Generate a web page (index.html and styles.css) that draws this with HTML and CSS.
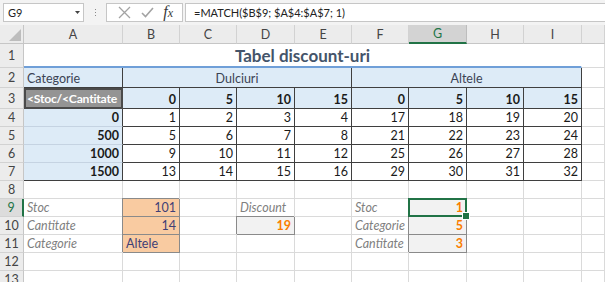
FILE: index.html
```html
<!DOCTYPE html>
<html>
<head>
<meta charset="utf-8">
<link rel="stylesheet" href="styles.css">
</head>
<body>
<div class="app">
  <div class="fbar">
    <div class="namebox"><span>G9</span><svg class="dd" width="5" height="3" viewBox="0 0 5 3"><path d="M0 0H5L2.5 3Z" fill="#444"/></svg></div>
    <div class="grip"><i></i><i></i><i></i></div>
    <div class="btns">
      <svg width="13" height="13" viewBox="0 0 13 13"><path d="M1 1L12 12M12 1L1 12" stroke="#a3a3a3" stroke-width="1.3"/></svg>
      <svg width="13" height="11" viewBox="0 0 13 11"><path d="M1 6L4.5 9.5L12 1" stroke="#a3a3a3" stroke-width="1.6" fill="none"/></svg>
      <span class="fx"><i>f</i><i class="x">x</i></span>
    </div>
    <div class="formula">=MATCH($B$9; $A$4:$A$7; 1)</div>
  </div>
  <div class="sheet">
    <div class="corner"><svg width="12" height="12" viewBox="0 0 12 12"><path d="M12 0V12H0Z" fill="#bdbdbd"/></svg></div>
    <div class="ch">A</div><div class="ch">B</div><div class="ch">C</div><div class="ch">D</div><div class="ch">E</div><div class="ch">F</div><div class="ch sel">G</div><div class="ch">H</div><div class="ch">I</div><div class="ch"></div>

    <div class="rh">1</div>
    <div class="c title">Tabel discount-uri</div>
    <div class="c"></div>

    <div class="rh">2</div>
    <div class="c hdr dr db txt2">Categorie</div>
    <div class="c hdr dr db ctr txt2 span4">Dulciuri</div>
    <div class="c hdr dr db ctr txt2 span4">Altele</div>
    <div class="c"></div>

    <div class="rh">3</div>
    <div class="c check">&lt;Stoc/&lt;Cantitate</div>
    <div class="c hdr dr db r b">0</div><div class="c hdr dr db r b">5</div><div class="c hdr dr db r b">10</div><div class="c hdr dr db r b">15</div>
    <div class="c hdr dr db r b">0</div><div class="c hdr dr db r b">5</div><div class="c hdr dr db r b">10</div><div class="c hdr dr db r b">15</div>
    <div class="c"></div>

    <div class="rh">4</div>
    <div class="c hdr dr lb r b">0</div>
    <div class="c dr db r">1</div><div class="c dr db r">2</div><div class="c dr db r">3</div><div class="c dr db r">4</div><div class="c dr db r">17</div><div class="c dr db r">18</div><div class="c dr db r">19</div><div class="c dr db r">20</div>
    <div class="c"></div>

    <div class="rh">5</div>
    <div class="c hdr dr lb r b">500</div>
    <div class="c dr db r">5</div><div class="c dr db r">6</div><div class="c dr db r">7</div><div class="c dr db r">8</div><div class="c dr db r">21</div><div class="c dr db r">22</div><div class="c dr db r">23</div><div class="c dr db r">24</div>
    <div class="c"></div>

    <div class="rh">6</div>
    <div class="c hdr dr lb r b">1000</div>
    <div class="c dr db r">9</div><div class="c dr db r">10</div><div class="c dr db r">11</div><div class="c dr db r">12</div><div class="c dr db r">25</div><div class="c dr db r">26</div><div class="c dr db r">27</div><div class="c dr db r">28</div>
    <div class="c"></div>

    <div class="rh">7</div>
    <div class="c hdr dr db r b">1500</div>
    <div class="c dr db r">13</div><div class="c dr db r">14</div><div class="c dr db r">15</div><div class="c dr db r">16</div><div class="c dr db r">29</div><div class="c dr db r">30</div><div class="c dr db r">31</div><div class="c dr db r">32</div>
    <div class="c"></div>

    <div class="rh">8</div>
    <div class="c"></div><div class="c"></div><div class="c"></div><div class="c"></div><div class="c"></div><div class="c"></div><div class="c"></div><div class="c"></div><div class="c"></div><div class="c"></div>

    <div class="rh sel">9</div>
    <div class="c expl">Stoc</div>
    <div class="c inp r">101</div>
    <div class="c"></div>
    <div class="c expl">Discount</div>
    <div class="c"></div>
    <div class="c expl">Stoc</div>
    <div class="c calc r active">1</div>
    <div class="c"></div><div class="c"></div><div class="c"></div>

    <div class="rh">10</div>
    <div class="c expl">Cantitate</div>
    <div class="c inp r">14</div>
    <div class="c"></div>
    <div class="c calc r">19</div>
    <div class="c"></div>
    <div class="c expl">Categorie</div>
    <div class="c calc r">5</div>
    <div class="c"></div><div class="c"></div><div class="c"></div>

    <div class="rh">11</div>
    <div class="c expl">Categorie</div>
    <div class="c inp">Altele</div>
    <div class="c"></div>
    <div class="c"></div>
    <div class="c"></div>
    <div class="c expl">Cantitate</div>
    <div class="c calc r">3</div>
    <div class="c"></div><div class="c"></div><div class="c"></div>

    <div class="rh">12</div>
    <div class="c"></div><div class="c"></div><div class="c"></div><div class="c"></div><div class="c"></div><div class="c"></div><div class="c"></div><div class="c"></div><div class="c"></div><div class="c"></div>

    <div class="rh">13</div>
    <div class="c"></div><div class="c"></div><div class="c"></div><div class="c"></div><div class="c"></div><div class="c"></div><div class="c"></div><div class="c"></div><div class="c"></div><div class="c"></div>
  </div>
</div>
</body>
</html>
```

FILE: styles.css
```css
* { box-sizing: border-box; }
html, body { margin: 0; padding: 0; background: #fff; overflow: hidden; }
body { width: 605px; height: 282px; font-family: Lato, "Liberation Sans", sans-serif; }
.app { display: flex; flex-direction: column; width: 605px; }

.fbar {
  height: 25px;
  background: #f3f3f3;
  display: flex;
  align-items: flex-start;
  padding-top: 3px;
}
.namebox {
  margin-left: 3px;
  width: 81px;
  height: 19px;
  background: #fff;
  border: 1px solid #c6c6c6;
  display: flex;
  align-items: center;
  justify-content: space-between;
  padding: 0 3px 0 4px;
  font-size: 11px;
  color: #222;
}
.grip {
  width: 22px;
  height: 19px;
  display: flex;
  flex-direction: column;
  align-items: center;
  justify-content: center;
  gap: 2px;
}
.grip i { display: block; width: 1px; height: 1px; background: #8a8a8a; }
.btns {
  width: 77px;
  height: 19px;
  background: #fff;
  border: 1px solid #c6c6c6;
  display: flex;
  align-items: center;
  justify-content: space-around;
  padding: 0 4px 0 6px;
}
.fx {
  font-family: "Liberation Serif", serif;
  font-size: 16px;
  color: #3a3a3a;
  line-height: 1;
  margin-top: -1px;
}
.fx .x { font-size: 12px; }
.formula {
  margin-left: 2px;
  flex: 1;
  height: 19px;
  background: #fff;
  border: 1px solid #c6c6c6;
  border-right: none;
  font-size: 11px;
  color: #222;
  display: flex;
  align-items: center;
  padding-left: 8px;
}

.sheet {
  display: grid;
  grid-template-columns: 24px 99px 57px 57px 58px 57px 57px 58px 57px 58px 1fr;
  grid-template-rows: 19px 24px 20px 21px repeat(10, 18px);
  font-size: 12.5px;
  color: #1a1a1a;
}
.corner {
  background: #ececec;
  border-right: 1px solid #c6c6c6;
  border-bottom: 1px solid #c6c6c6;
  display: flex;
  align-items: flex-end;
  justify-content: flex-end;
  padding: 0 2px 2px 0;
}
.ch {
  background: #ececec;
  border-right: 1px solid #d2d2d2;
  border-bottom: 1px solid #c6c6c6;
  display: flex;
  align-items: center;
  justify-content: center;
  color: #444;
  font-size: 12.5px;
}
.ch.sel {
  background: #d3d3d3;
  color: #217346;
  border-bottom: 2px solid #217346;
  border-right-color: #bdbdbd;
}
.rh {
  background: #ececec;
  border-right: 1px solid #c6c6c6;
  border-bottom: 1px solid #d2d2d2;
  display: flex;
  align-items: center;
  justify-content: center;
  color: #444;
  font-size: 12.5px;
}
.rh.sel {
  background: #dcdcdc;
  color: #217346;
  border-right: 2px solid #217346;
}

.c {
  border-right: 1px solid #dadada;
  border-bottom: 1px solid #dadada;
  display: flex;
  align-items: flex-end;
  padding: 0 3px 1px 3px;
  white-space: nowrap;
  line-height: 15px;
}
.r { justify-content: flex-end; }
.ctr { justify-content: center; }
.b { font-weight: 700; }
.span4 { grid-column: span 4; }
.hdr { background: #ddebf7; }
.dr { border-right-color: #3f3f3f; }
.db { border-bottom-color: #3f3f3f; }
.lb { border-bottom-color: #c5d3e2; }
.txt2 { color: #3b4354; }

.title {
  grid-column: span 9;
  justify-content: center;
  border-bottom: 2px solid #6f9fd8;
  border-right-color: transparent;
  font-size: 17px;
  font-weight: 700;
  color: #44546a;
  line-height: 20px;
  padding-bottom: 0;
}
.check {
  background: #949494;
  border: 2px solid #4a4a4a;
  color: #fff;
  font-weight: 700;
  font-size: 12.2px;
  letter-spacing: -0.25px;
  padding: 0 0 0 1px;
  align-items: center;
  overflow: hidden;
}

.expl { color: #7f7f7f; font-style: italic; }
.inp {
  background: #f9cba1;
  color: #3f3f76;
  border-right-color: #8a8a8a;
  border-bottom-color: #8a8a8a;
  box-shadow: -1px -1px 0 0 #8a8a8a;
}
.calc {
  background: #f2f2f2;
  color: #fa7d00;
  font-weight: 700;
  border-right-color: #8a8a8a;
  border-bottom-color: #8a8a8a;
  box-shadow: -1px -1px 0 0 #8a8a8a;
}
.active { position: relative; }
.active::after {
  content: "";
  position: absolute;
  left: -1px; top: -1px; right: -1px; bottom: -1px;
  border: 2px solid #217346;
}
.active::before {
  content: "";
  position: absolute;
  right: -4px; bottom: -4px;
  width: 6px; height: 6px;
  background: #217346;
  border: 1px solid #fff;
  z-index: 1;
}
```
